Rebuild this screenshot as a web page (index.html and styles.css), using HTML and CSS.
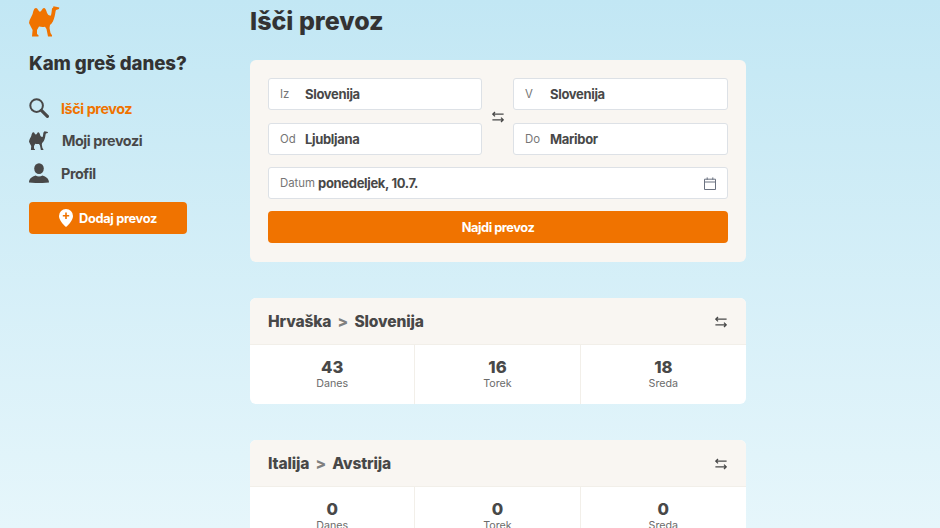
FILE: index.html
```html
<!DOCTYPE html>
<html lang="sl">

<head>
    <meta charset="UTF-8">
    <meta name="viewport" content="width=device-width, initial-scale=1.0">
    <title>Išči prevoz</title>
    <link rel="stylesheet" href="styles.css">
</head>

<body>
    <svg class="icon-defs" width="0" height="0" aria-hidden="true">
        <symbol id="camel" viewBox="0 0 32 32">
            <path d="M0 17C.4 13 2.6 11 3.6 8 4.4 5 5 2 7 2 8.8 2 9.4 5.7 11 5.7 12.6 5.7 13.2 2 15 2 17.4 2 17.6 8.6 20 9.2L21.7 9.7C22.6 8 22.8 4 23 2.4L24.2 1.6 24.4.2 27 .8 30.3 1.4 30 3 27 4C26.4 5 26.4 8 25.6 10.6 24.8 14 23.4 17.4 21 19L20.5 22 21.5 27 23 29.2 23 30.5 19 30.5 17.5 23 16 20.7C14 21.2 12 21 10 20.5L8 24 8 28 9.5 29.2 9.5 30.5 3 30.5 3.6 24 2 21Z" />
        </symbol>
        <symbol id="swap" viewBox="0 0 12 12">
            <path d="M11.6 3.2H.8M3 1 .8 3.2 3 5.4M.4 8.8h10.8M9 6.6l2.2 2.2L9 11" fill="none" stroke="currentColor" stroke-width="1.3" />
        </symbol>
    </svg>

    <div class="layout">
        <aside class="sidebar">
            <svg class="logo"><use href="#camel" /></svg>
            <h2 class="tagline">Kam greš danes?</h2>
            <nav class="nav">
                <a class="nav-item active" href="#">
                    <svg class="nav-icon" viewBox="0 0 20 20">
                        <circle cx="7.6" cy="7.6" r="6.3" fill="none" stroke="#484848" stroke-width="2" />
                        <path d="M12.4 12.4 18.4 18.4" stroke="#484848" stroke-width="3.2" stroke-linecap="round" />
                    </svg>
                    <span>Išči prevoz</span>
                </a>
                <a class="nav-item" href="#">
                    <svg class="nav-icon camel-small"><use href="#camel" /></svg>
                    <span>Moji prevozi</span>
                </a>
                <a class="nav-item" href="#">
                    <svg class="nav-icon" viewBox="0 0 20 20">
                        <ellipse cx="10" cy="5.6" rx="4.8" ry="5.4" fill="#484848" />
                        <path d="M0 19.6C0 15.6 3 13.8 6.6 12.6 8.6 13.8 11.4 13.8 13.4 12.6 17 13.8 20 15.6 20 19.6 14 20.2 6 20.2 0 19.6Z" fill="#484848" />
                    </svg>
                    <span>Profil</span>
                </a>
            </nav>
            <button class="btn add-btn">
                <svg class="pin" viewBox="0 0 14 18">
                    <path d="M7 0A7 7 0 0 1 14 7C14 11 10 15.4 7 18 4 15.4 0 11 0 7A7 7 0 0 1 7 0Z" fill="#fff" />
                    <path d="M7 3.6V10M3.8 6.8H10.2" stroke="#f07300" stroke-width="1.6" />
                </svg>
                Dodaj prevoz
            </button>
        </aside>

        <main class="main">
            <h1 class="title">Išči prevoz</h1>

            <section class="search-card">
                <div class="route-fields">
                    <div class="field-col">
                        <div class="field"><label>Iz</label><b>Slovenija</b></div>
                        <div class="field"><label>Od</label><b>Ljubljana</b></div>
                    </div>
                    <svg class="swap"><use href="#swap" /></svg>
                    <div class="field-col">
                        <div class="field"><label>V</label><b>Slovenija</b></div>
                        <div class="field"><label>Do</label><b>Maribor</b></div>
                    </div>
                </div>
                <div class="field date-field">
                    <label>Datum</label><b>ponedeljek, 10.7.</b>
                    <svg class="calendar" viewBox="0 0 12 13">
                        <path d="M.5 2.2h11v10.3H.5zM.5 5h11M3.2.4v2.4M8.8.4v2.4" fill="none" stroke="#6b7280" stroke-width="1" />
                    </svg>
                </div>
                <button class="btn find-btn">Najdi prevoz</button>
            </section>

            <section class="route-card">
                <header class="route-head">
                    <h3>Hrvaška <i>&gt;</i> Slovenija</h3>
                    <svg class="swap"><use href="#swap" /></svg>
                </header>
                <div class="route-days">
                    <div class="day"><strong>43</strong><span>Danes</span></div>
                    <div class="day"><strong>16</strong><span>Torek</span></div>
                    <div class="day"><strong>18</strong><span>Sreda</span></div>
                </div>
            </section>

            <section class="route-card">
                <header class="route-head">
                    <h3>Italija <i>&gt;</i> Avstrija</h3>
                    <svg class="swap"><use href="#swap" /></svg>
                </header>
                <div class="route-days">
                    <div class="day"><strong>0</strong><span>Danes</span></div>
                    <div class="day"><strong>0</strong><span>Torek</span></div>
                    <div class="day"><strong>0</strong><span>Sreda</span></div>
                </div>
            </section>
        </main>
    </div>
</body>

</html>
```

FILE: styles.css
```css
html,
body {
    margin: 0;
    height: 528px;
    overflow: hidden;
}

body {
    font-family: 'Inter', sans-serif;
    color: #484848;
    background: linear-gradient(180deg, #c2e7f4 0%, #e6f6fb 100%);
}

.icon-defs {
    display: block;
}

.layout {
    display: flex;
    padding-left: 29px;
}

/* Sidebar */
.sidebar {
    width: 158px;
    margin-right: 63px;
    padding-top: 6px;
}

.logo {
    display: block;
    width: 32px;
    height: 32px;
    fill: #f07300;
}

.tagline {
    margin: 14px 0 22px;
    font-size: 18.7px;
    line-height: 24px;
    font-weight: 800;
    letter-spacing: -0.005em;
    color: #333;
}

.nav {
    display: flex;
    flex-direction: column;
    gap: 12.5px;
}

.nav-item {
    display: flex;
    align-items: center;
    height: 20px;
    font-size: 14.4px;
    font-weight: 700;
    letter-spacing: -0.03em;
    color: #484848;
    text-decoration: none;
}

.nav-item.active {
    color: #f07300;
}

.nav-icon {
    flex: none;
    width: 20px;
    height: 20px;
    margin-right: 12px;
}

.camel-small {
    fill: #484848;
    margin-right: 13px;
}

.btn {
    display: flex;
    align-items: center;
    justify-content: center;
    border: 0;
    border-radius: 4px;
    background: #f07300;
    color: #fff;
    font-family: 'Inter', sans-serif;
    font-size: 12.8px;
    font-weight: 700;
    letter-spacing: -0.025em;
}

.add-btn {
    width: 158px;
    height: 32px;
    margin-top: 19px;
    gap: 6px;
}

.pin {
    width: 14px;
    height: 18px;
}

/* Main column */
.main {
    width: 496px;
}

.title {
    margin: 4px 0 21px;
    font-size: 25px;
    line-height: 35px;
    font-weight: 800;
    color: #333;
}

.search-card {
    padding: 18px 18px 19px;
    border-radius: 6px;
    background: #f9f6f2;
}

.route-fields {
    display: grid;
    grid-template-columns: 214px 31px 1fr;
    align-items: center;
    justify-items: center;
}

.field-col {
    display: flex;
    flex-direction: column;
    gap: 13px;
    width: 100%;
}

.field {
    display: flex;
    align-items: center;
    box-sizing: border-box;
    height: 32px;
    padding: 0 11px;
    border: 1px solid #dde1e6;
    border-radius: 3px;
    background: #fff;
    font-size: 13px;
}

.field label {
    width: 25px;
    font-size: 11.4px;
    color: #767676;
}

.field b {
    font-weight: 700;
    letter-spacing: -0.025em;
    color: #484848;
}

.swap {
    width: 12px;
    height: 12px;
    color: #484848;
}

.date-field {
    margin-top: 12px;
}

.date-field label {
    width: auto;
    margin-right: 3px;
}

.calendar {
    width: 12px;
    height: 13px;
    margin-left: auto;
}

.find-btn {
    width: 100%;
    height: 32px;
    margin-top: 12px;
    letter-spacing: -0.035em;
}

/* Route cards */
.route-card {
    margin-top: 36px;
    border-radius: 6px;
    background: #fff;
    overflow: hidden;
}

.route-head {
    display: flex;
    align-items: center;
    justify-content: space-between;
    height: 46px;
    padding: 0 19px 0 18px;
    border-bottom: 1px solid #f2efe9;
    background: #f9f6f2;
}

.route-head .swap {
    margin-top: 2px;
}

.route-head h3 {
    margin: 0;
    font-size: 15.6px;
    font-weight: 800;
    letter-spacing: -0.01em;
    color: #484848;
}

.route-head i {
    margin: 0 3px;
    font-style: normal;
    color: #808080;
}

.route-days {
    display: grid;
    grid-template-columns: repeat(3, 1fr);
}

.day {
    display: flex;
    flex-direction: column;
    align-items: center;
    box-sizing: border-box;
    height: 59px;
    padding-top: 12px;
    border-right: 1px solid #f2efe9;
}

.day:last-child {
    border-right: 0;
}

.day strong {
    font-size: 16.6px;
    line-height: 20px;
    font-weight: 800;
    color: #484848;
}

.day span {
    font-size: 10.7px;
    line-height: 14px;
    color: #6b6b6b;
}
```
